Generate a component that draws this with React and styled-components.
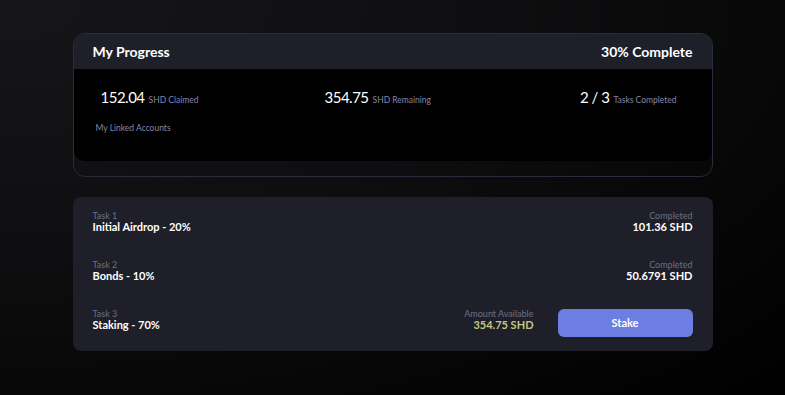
import React from "react";
import styled, { createGlobalStyle } from "styled-components";

const GlobalStyle = createGlobalStyle`
  *, *::before, *::after {
    box-sizing: border-box;
  }
  html, body {
    margin: 0;
    padding: 0;
    height: 100%;
  }
  body {
    font-family: Lato, "Open Sans", sans-serif;
    background: radial-gradient(ellipse at 0% 0%, #161619 0%, #0e0e10 45%, #050505 80%, #000 100%);
    color: #fff;
    min-height: 395px;
  }
`;

const Page = styled.div`
  width: 640px;
  margin: 0 auto;
  padding-top: 33px;
  display: flex;
  flex-direction: column;
  gap: 20px;
`;

const ProgressCard = styled.div`
  border: 1px solid #2a2c39;
  border-radius: 12px;
  padding-bottom: 15px;
  overflow: hidden;
`;

const Header = styled.div`
  display: flex;
  justify-content: space-between;
  align-items: center;
  height: 35px;
  padding: 0 19px;
  background-color: #1e2029;
  font-weight: 700;
  font-size: 14px;
`;

const Panel = styled.div`
  background-color: #000;
  border-radius: 0 0 10px 10px;
  height: 92px;
  padding: 19px 35px 0 27px;
`;

const StatsRow = styled.div`
  display: grid;
  grid-template-columns: 224px 1fr auto;
  align-items: baseline;
`;

const Stat = styled.div`
  display: flex;
  align-items: baseline;
  gap: 4px;
`;

const StatValue = styled.span`
  font-size: 15px;
  font-weight: 400;
  letter-spacing: -0.5px;
  color: #fff;
`;

const StatLabel = styled.span`
  font-size: 8.5px;
  color: #8387a8;
`;

const Linked = styled.div`
  margin-top: 17px;
  margin-left: -5px;
  font-size: 8.5px;
  color: #8387a8;
`;

const TasksCard = styled.div`
  background-color: #1e1f29;
  border-radius: 8px;
  padding: 13px 20px 19px;
  display: flex;
  flex-direction: column;
  gap: 25px;
`;

const TaskRow = styled.div`
  display: flex;
  justify-content: space-between;
  align-items: center;
  height: 24px;
`;

const Block = styled.div`
  display: flex;
  flex-direction: column;
  align-items: ${({ $right }) => ($right ? "flex-end" : "flex-start")};
  line-height: 1.1;
`;

const Small = styled.span`
  font-size: 9px;
  color: #6b7086;
`;

const Title = styled.span`
  font-size: 11px;
  font-weight: 700;
  color: ${({ $accent }) => $accent || "#fff"};
`;

const Actions = styled.div`
  display: flex;
  align-items: center;
  gap: 24px;
`;

const StakeButton = styled.button`
  width: 135px;
  height: 28px;
  margin-top: 5px;
  border: none;
  border-radius: 6px;
  background-color: #6c7ee1;
  color: #fff;
  font-family: inherit;
  font-weight: 700;
  font-size: 11px;
  cursor: pointer;
`;

const tasks = [
  { n: 1, name: "Initial Airdrop - 20%", amount: "101.36 SHD" },
  { n: 2, name: "Bonds - 10%", amount: "50.6791 SHD" },
];

export default function App() {
  return (
    <>
      <GlobalStyle />
      <Page>
        <ProgressCard>
          <Header>
            <span>My Progress</span>
            <span>30% Complete</span>
          </Header>
          <Panel>
            <StatsRow>
              <Stat>
                <StatValue>152.04</StatValue>
                <StatLabel>SHD Claimed</StatLabel>
              </Stat>
              <Stat>
                <StatValue>354.75</StatValue>
                <StatLabel>SHD Remaining</StatLabel>
              </Stat>
              <Stat>
                <StatValue>2 / 3</StatValue>
                <StatLabel>Tasks Completed</StatLabel>
              </Stat>
            </StatsRow>
            <Linked>My Linked Accounts</Linked>
          </Panel>
        </ProgressCard>

        <TasksCard>
          {tasks.map((t) => (
            <TaskRow key={t.n}>
              <Block>
                <Small>Task {t.n}</Small>
                <Title>{t.name}</Title>
              </Block>
              <Block $right>
                <Small>Completed</Small>
                <Title>{t.amount}</Title>
              </Block>
            </TaskRow>
          ))}
          <TaskRow>
            <Block>
              <Small>Task 3</Small>
              <Title>Staking - 70%</Title>
            </Block>
            <Actions>
              <Block $right>
                <Small>Amount Available</Small>
                <Title $accent="#c5c87e">354.75 SHD</Title>
              </Block>
              <StakeButton>Stake</StakeButton>
            </Actions>
          </TaskRow>
        </TasksCard>
      </Page>
    </>
  );
}
